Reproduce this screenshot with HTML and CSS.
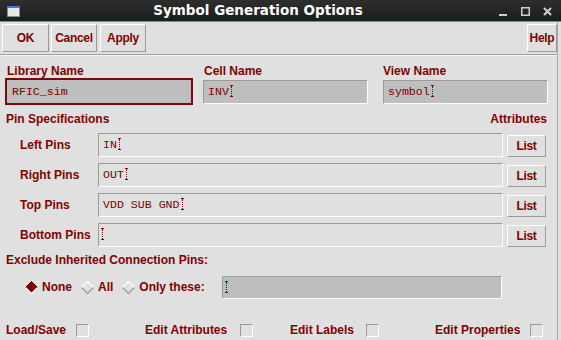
FILE: index.html
```html
<!DOCTYPE html>
<html lang="en">
<head>
    <meta charset="UTF-8">
    <title>Symbol Generation Options</title>
    <link rel="stylesheet" href="styles.css">
</head>
<body>
    <div class="window">
        <div class="titlebar">
            <svg class="app-icon" width="13" height="11" viewBox="0 0 13 11">
                <rect x="0.5" y="0.5" width="12" height="10" fill="#e8e8e8" stroke="#8a8a8a"/>
                <rect x="0" y="0" width="13" height="2" fill="#4a78c8"/>
            </svg>
            <div class="title">Symbol Generation Options</div>
            <div class="controls">
                <svg width="9" height="9" viewBox="0 0 9 9"><rect x="0" y="7" width="8" height="2" fill="#cfcfcf"/></svg>
                <svg width="9" height="9" viewBox="0 0 9 9"><rect x="0.75" y="0.75" width="7.5" height="7.5" fill="none" stroke="#cfcfcf" stroke-width="1.5"/></svg>
                <svg width="9" height="9" viewBox="0 0 9 9"><path d="M1 1 L8 8 M8 1 L1 8" stroke="#cfcfcf" stroke-width="2"/></svg>
            </div>
        </div>

        <div class="content">
            <div class="toolbar">
                <button class="btn btn-ok">OK</button>
                <button class="btn btn-cancel">Cancel</button>
                <button class="btn btn-apply">Apply</button>
                <div class="spacer"></div>
                <button class="btn btn-help">Help</button>
            </div>

            <div class="names">
                <div class="name-col col-lib">
                    <div class="label">Library Name</div>
                    <div class="focus-ring">
                        <div class="field filled">RFIC_sim</div>
                    </div>
                </div>
                <div class="name-col col-cell">
                    <div class="label">Cell Name</div>
                    <div class="field filled">INV<span class="cursor"></span></div>
                </div>
                <div class="name-col col-view">
                    <div class="label">View Name</div>
                    <div class="field filled">symbol<span class="cursor"></span></div>
                </div>
            </div>

            <div class="section-head">
                <span class="label">Pin Specifications</span>
                <span class="label">Attributes</span>
            </div>

            <div class="pin-row">
                <div class="label pin-label">Left Pins</div>
                <div class="field pin-field">IN<span class="cursor"></span></div>
                <button class="btn btn-list">List</button>
            </div>
            <div class="pin-row">
                <div class="label pin-label">Right Pins</div>
                <div class="field pin-field">OUT<span class="cursor"></span></div>
                <button class="btn btn-list">List</button>
            </div>
            <div class="pin-row">
                <div class="label pin-label">Top Pins</div>
                <div class="field pin-field">VDD SUB GND<span class="cursor"></span></div>
                <button class="btn btn-list">List</button>
            </div>
            <div class="pin-row">
                <div class="label pin-label">Bottom Pins</div>
                <div class="field pin-field"><span class="cursor first"></span></div>
                <button class="btn btn-list">List</button>
            </div>

            <div class="label exclude-head">Exclude Inherited Connection Pins:</div>

            <div class="radio-row">
                <div class="radio">
                    <svg width="13" height="13" viewBox="0 0 13 13">
                        <polygon points="6.5,0.5 12.5,6.5 6.5,12.5 0.5,6.5" fill="#800000"/>
                        <polyline points="0.5,6.5 6.5,0.5 12.5,6.5" fill="none" stroke="#5a0000" stroke-width="1"/>
                        <polyline points="0.5,6.5 6.5,12.5 12.5,6.5" fill="none" stroke="#ffffff" stroke-width="1.2"/>
                    </svg>
                    <span class="label">None</span>
                </div>
                <div class="radio">
                    <svg width="13" height="13" viewBox="0 0 13 13">
                        <polyline points="0.5,6.5 6.5,0.5 12.5,6.5" fill="none" stroke="#ffffff" stroke-width="1.2"/>
                        <polyline points="0.5,6.5 6.5,12.5 12.5,6.5" fill="none" stroke="#9a9a9a" stroke-width="1.2"/>
                    </svg>
                    <span class="label">All</span>
                </div>
                <div class="radio">
                    <svg width="13" height="13" viewBox="0 0 13 13">
                        <polyline points="0.5,6.5 6.5,0.5 12.5,6.5" fill="none" stroke="#ffffff" stroke-width="1.2"/>
                        <polyline points="0.5,6.5 6.5,12.5 12.5,6.5" fill="none" stroke="#9a9a9a" stroke-width="1.2"/>
                    </svg>
                    <span class="label">Only these:</span>
                </div>
                <div class="field filled only-field"><span class="cursor first"></span></div>
            </div>

            <div class="bottom-row">
                <div class="check-item item-load"><span class="label">Load/Save</span><span class="checkbox"></span></div>
                <div class="check-item item-attr"><span class="label">Edit Attributes</span><span class="checkbox"></span></div>
                <div class="check-item item-labels"><span class="label">Edit Labels</span><span class="checkbox"></span></div>
                <div class="check-item item-props"><span class="label">Edit Properties</span><span class="checkbox"></span></div>
            </div>
        </div>
    </div>
</body>
</html>
```

FILE: styles.css
```css
* {
    margin: 0;
    padding: 0;
    box-sizing: border-box;
}

body {
    width: 561px;
    height: 340px;
    overflow: hidden;
    background: #e0e0e0;
    font-family: "Liberation Sans", Arial, sans-serif;
}

.window {
    width: 561px;
    height: 340px;
    display: flex;
    flex-direction: column;
}

/* Title bar */
.titlebar {
    height: 22px;
    background: linear-gradient(#2e2e2e, #1c1c1c);
    border-bottom: 1px solid #6d8db0;
    display: flex;
    align-items: center;
    position: relative;
    padding-left: 7px;
}

.app-icon {
    margin-top: 1px;
}

.title {
    position: absolute;
    left: 0;
    right: 45px;
    top: 2px;
    text-align: center;
    color: #ffffff;
    font-family: "DejaVu Sans", sans-serif;
    font-weight: bold;
    font-size: 13.5px;
    pointer-events: none;
}

.controls {
    margin-left: auto;
    margin-right: 9px;
    display: flex;
    gap: 13px;
    margin-top: 1px;
}

/* Content */
.content {
    flex: 1;
    border-right: 1px solid #a8a8a8;
    width: 558px;
}

.label {
    color: #800000;
    font-weight: bold;
    font-size: 12px;
    white-space: nowrap;
}

.btn {
    background: #e0e0e0;
    border: 1px solid;
    border-color: #ffffff #9a9a9a #9a9a9a #ffffff;
    color: #800000;
    font-family: "Liberation Sans", Arial, sans-serif;
    font-weight: bold;
    font-size: 12px;
    letter-spacing: -0.3px;
}

.toolbar {
    display: flex;
    gap: 2px;
    padding: 2px 0 0 2px;
    height: 33px;
    border-bottom: 1px solid #a0a0a0;
    box-shadow: 0 1px 0 #f4f4f4;
}

.toolbar .btn {
    height: 28px;
}

.btn-ok { width: 47px; }
.btn-cancel { width: 46px; }
.btn-apply { width: 46px; margin-left: 1px; }
.btn-help { width: 30px; }

.spacer { flex: 1; }

/* Fields */
.field {
    height: 24px;
    border: 1px solid;
    border-color: #9a9a9a #ffffff #ffffff #9a9a9a;
    color: #800000;
    font-family: "Liberation Mono", "Courier New", monospace;
    font-size: 11.6px;
    padding: 4px 0 0 4px;
    white-space: pre;
    display: flex;
    align-items: flex-start;
}

.field.filled {
    background: #bebebe;
}

/* dotted I-beam text cursor */
.cursor {
    width: 3px;
    height: 12px;
    margin-left: 1px;
    position: relative;
    border-top: 1px solid #800000;
    border-bottom: 1px solid #800000;
}

.cursor::before {
    content: "";
    position: absolute;
    left: 1px;
    top: 0;
    bottom: 0;
    border-left: 1px dotted #800000;
}

.cursor.first {
    margin-left: -2px;
}

/* Name columns */
.names {
    display: flex;
    padding: 9px 0 0 5px;
}

.name-col .label {
    height: 14px;
    line-height: 14px;
}

.col-lib { width: 188px; }
.col-lib .label { padding-left: 2px; }
.col-cell { width: 165px; margin-left: 10px; }
.col-cell .label { padding-left: 1px; }
.col-view { width: 165px; margin-left: 15px; }

.col-cell .label, .col-view .label {
    margin-bottom: 2px;
}

.focus-ring {
    border: 2px solid #7a0a0a;
}

.focus-ring .field {
    height: 23px;
    border-color: #bebebe;
    padding-left: 4px;
}

/* Pin specifications */
.section-head {
    display: flex;
    justify-content: space-between;
    padding: 7px 10px 0 6px;
    height: 25px;
    line-height: 14px;
}

.pin-row {
    display: flex;
    align-items: center;
    height: 30px;
    padding-left: 20px;
}

.pin-label {
    width: 78px;
}

.pin-field {
    width: 405px;
}

.btn-list {
    width: 39px;
    height: 22px;
    margin-left: 4px;
    margin-top: 1px;
}

.exclude-head {
    padding: 3px 0 0 6px;
    height: 24px;
}

.radio-row {
    display: flex;
    align-items: center;
    padding-left: 25px;
    height: 26px;
}

.radio {
    display: flex;
    align-items: center;
    gap: 4px;
    margin-right: 9px;
}

.only-field {
    width: 280px;
    height: 23px;
    margin-left: 8px;
}

/* Load/Save and edit toggles */
.bottom-row {
    display: flex;
    align-items: center;
    padding-left: 6px;
    margin-top: 23px;
    height: 14px;
}

.check-item {
    display: flex;
    align-items: center;
}

.checkbox {
    width: 13px;
    height: 13px;
    margin-left: auto;
    border: 1px solid;
    border-color: #9a9a9a #ffffff #ffffff #9a9a9a;
}

.item-load { width: 83px; }
.item-attr { width: 108px; margin-left: 56px; }
.item-labels { width: 89px; margin-left: 37px; }
.item-props { width: 108px; margin-left: 56px; }
```
